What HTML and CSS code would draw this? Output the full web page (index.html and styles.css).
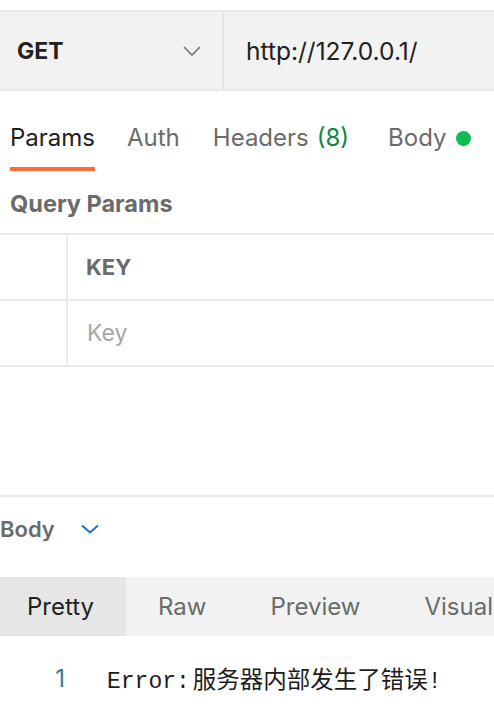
FILE: index.html
```html
<!DOCTYPE html>
<html>
<head>
<meta charset="utf-8">
<link rel="stylesheet" href="styles.css">
</head>
<body>
<div class="urlbar">
  <div class="method">
    <span class="method-name">GET</span>
    <svg class="chev" width="18" height="10" viewBox="0 0 18 10"><path d="M1 1 L9 9 L17 1" fill="none" stroke="#767676" stroke-width="1.6"/></svg>
  </div>
  <div class="url">http://127.0.0.1/</div>
</div>

<div class="tabs">
  <div class="tab active">Params</div>
  <div class="tab">Auth</div>
  <div class="tab headers">Headers <span class="count">(8)</span></div>
  <div class="tab">Body <span class="dot"></span></div>
</div>

<div class="section-title">Query Params</div>

<div class="table">
  <div class="row head">
    <div class="cell check"></div>
    <div class="cell key">KEY</div>
  </div>
  <div class="row">
    <div class="cell check"></div>
    <div class="cell placeholder">Key</div>
  </div>
</div>

<div class="spacer"></div>

<div class="resp-head">
  <span class="resp-title">Body</span>
  <svg class="chev-blue" width="18" height="10" viewBox="0 0 18 10"><path d="M1 1.5 L9 8.5 L17 1.5" fill="none" stroke="#1a6fd8" stroke-width="2"/></svg>
</div>

<div class="resp-tabs">
  <div class="rtab active">Pretty</div>
  <div class="rtab">Raw</div>
  <div class="rtab">Preview</div>
  <div class="rtab">Visual</div>
</div>

<div class="code">
  <span class="ln">1</span>
  <span class="line">Error:<span class="cjk">服务器内部发生了错误</span>!</span>
</div>
</body>
</html>
```

FILE: styles.css
```css
html, body {
  margin: 0;
  padding: 0;
  background: #ffffff;
  font-family: Inter, "Noto Sans", sans-serif;
  overflow: hidden;
}
body {
  width: 494px;
  height: 726px;
}
.urlbar {
  margin-top: 10px;
  display: flex;
  height: 77px;
  background: #f2f2f2;
  border-top: 2px solid #e8e8e8;
  border-bottom: 2px solid #e8e8e8;
}
.method {
  width: 224px;
  box-sizing: border-box;
  padding: 0 21px 0 17px;
  border-right: 2px solid #e4e4e4;
  display: flex;
  align-items: center;
  justify-content: space-between;
}
.method-name {
  font-size: 23px;
  font-weight: 700;
  color: #212121;
}
.url {
  display: flex;
  align-items: center;
  padding-left: 22px;
  font-size: 24.5px;
  color: #212121;
}
.tabs {
  display: flex;
  padding-left: 10px;
}
.tab {
  font-size: 24px;
  line-height: 28px;
  color: #6b6b6b;
  padding: 33px 0 15px;
  border-bottom: 4px solid transparent;
  margin-right: 33px;
  display: flex;
  align-items: center;
  white-space: nowrap;
}
.tab.active {
  color: #212121;
  border-bottom-color: #ff6c37;
  margin-right: 32px;
}
.tab.headers {
  margin-right: 39px;
}
.count {
  color: #0b8a3e;
  margin-left: 8px;
}
.dot {
  display: inline-block;
  width: 15px;
  height: 15px;
  border-radius: 50%;
  background: #0cbb52;
  margin-left: 9px;
}
.section-title {
  font-size: 23.5px;
  font-weight: 700;
  color: #6b6b6b;
  line-height: 28px;
  padding: 19px 0 15px 10px;
}
.table {
  border-top: 2px solid #ebebeb;
}
.row {
  display: flex;
  height: 64px;
  border-bottom: 2px solid #ebebeb;
}
.cell {
  display: flex;
  align-items: center;
}
.check {
  width: 66px;
  border-right: 2px solid #ebebeb;
}
.key {
  padding-left: 18px;
  font-size: 22px;
  font-weight: 700;
  color: #6b6b6b;
}
.placeholder {
  padding-left: 19px;
  font-size: 23px;
  color: #a6a6a6;
}
.spacer {
  height: 128px;
  border-bottom: 2px solid #ebebeb;
}
.resp-head {
  display: flex;
  align-items: center;
  height: 80px;
  box-sizing: border-box;
  padding-bottom: 17px;
}
.resp-title {
  font-size: 22px;
  font-weight: 600;
  color: #6b6b6b;
}
.chev-blue {
  margin-left: 26px;
}
.resp-tabs {
  display: flex;
  height: 59px;
  background: #f2f2f2;
  overflow: hidden;
}
.rtab {
  display: flex;
  align-items: center;
  font-size: 24px;
  color: #6b6b6b;
  padding: 0 32px;
  white-space: nowrap;
}
.rtab.active {
  background: #e6e6e6;
  color: #212121;
  padding: 0 32px 0 27px;
}
.code {
  display: flex;
  align-items: center;
  height: 84px;
}
.ln {
  width: 65px;
  text-align: right;
  padding-right: 42px;
  font-family: Inter, sans-serif;
  font-size: 24px;
  color: #2f7e99;
}
.line {
  font-family: "Liberation Mono", "Noto Sans CJK SC", monospace;
  font-size: 23px;
  color: #1c1c1c;
  white-space: nowrap;
}
.cjk {
  font-family: "Noto Sans CJK SC", sans-serif;
  font-size: 23.5px;
  margin-left: 3px;
}
```
